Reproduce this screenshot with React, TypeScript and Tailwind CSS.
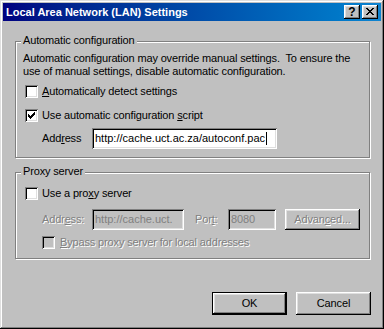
import React from "react";

// classic 3d borders
const sunken =
  "shadow-[inset_1px_1px_0_#808080,inset_-1px_-1px_0_#fff,inset_2px_2px_0_#000,inset_-2px_-2px_0_#dfdfdf]";
const raised =
  "shadow-[inset_-1px_-1px_0_#000,inset_1px_1px_0_#fff,inset_-2px_-2px_0_#808080,inset_2px_2px_0_#dfdfdf]";
const etched =
  "relative border border-[#808080] shadow-[inset_1px_1px_0_#fff,1px_1px_0_#fff]";
const grayed = "text-[#808080] [text-shadow:1px_1px_0_#fff]";

const CHECK = [
  [6, 0, 1],
  [5, 1, 2],
  [0, 2, 1],
  [4, 2, 3],
  [0, 3, 2],
  [3, 3, 3],
  [0, 4, 5],
  [1, 5, 3],
  [2, 6, 1],
];

const CLOSE = [
  [0, 0, 2],
  [6, 0, 2],
  [1, 1, 2],
  [5, 1, 2],
  [2, 2, 4],
  [3, 3, 2],
  [2, 4, 4],
  [1, 5, 2],
  [5, 5, 2],
  [0, 6, 2],
  [6, 6, 2],
];

function Pixels({ rows, w, h }: { rows: number[][]; w: number; h: number }) {
  return (
    <svg width={w} height={h} viewBox={`0 0 ${w} ${h}`} className="block" shapeRendering="crispEdges">
      {rows.map(([x, y, len], i) => (
        <rect key={i} x={x} y={y} width={len} height={1} fill="#000" />
      ))}
    </svg>
  );
}

function Checkbox({ checked, disabled }: { checked?: boolean; disabled?: boolean }) {
  return (
    <span
      className={`block w-[13px] h-[13px] shrink-0 p-[3px] ${sunken} ${
        disabled ? "bg-[#c0c0c0]" : "bg-white"
      }`}
    >
      {checked && <Pixels rows={CHECK} w={7} h={7} />}
    </span>
  );
}

function Group({ label, className, children }: { label: string; className: string; children: React.ReactNode }) {
  return (
    <div className={`${etched} w-[355px] flex flex-col ${className}`}>
      <span className="absolute -top-[8px] left-[5px] px-[2px] bg-[#c0c0c0] leading-[13px]">
        {label}
      </span>
      {children}
    </div>
  );
}

export default function App() {
  return (
    <div className="w-[384px] h-[329px] p-[3px] bg-[#c0c0c0] flex flex-col text-[11px] leading-[13px] text-black font-['Liberation_Sans',Arial,sans-serif] shadow-[inset_-1px_-1px_0_#000,inset_1px_1px_0_#dfdfdf,inset_-2px_-2px_0_#808080,inset_2px_2px_0_#fff] select-none">
      {/* Title bar */}
      <div className="h-[18px] flex items-center pl-[3px] pr-[3px] bg-linear-to-r from-[#000080] to-[#1084d0]">
        <span className="flex-1 font-bold text-white">Local Area Network (LAN) Settings</span>
        <div className="flex gap-[2px]">
          <div className={`w-[16px] h-[14px] bg-[#c0c0c0] ${raised} flex items-center justify-center font-bold text-[12px] leading-[14px] pb-[1px]`}>
            ?
          </div>
          <div className={`w-[16px] h-[14px] bg-[#c0c0c0] ${raised} flex pl-[4px] pt-[3px]`}>
            <Pixels rows={CLOSE} w={8} h={7} />
          </div>
        </div>
      </div>

      {/* Body */}
      <div className="flex-1 flex flex-col pl-[12px] pr-[10px] tracking-[-0.15px]">
        <Group label="Automatic configuration" className="mt-[20px] pt-[10px] pl-[7px] pb-[8px]">
          <p className="whitespace-nowrap">
            Automatic configuration may override manual settings.&nbsp; To ensure the
            <br />
            use of manual settings, disable automatic configuration.
          </p>
          <label className="mt-[7px] ml-[2px] h-[13px] flex items-center gap-[4px]">
            <Checkbox />
            <span>
              <u>A</u>utomatically detect settings
            </span>
          </label>
          <label className="mt-[11px] ml-[2px] h-[13px] flex items-center gap-[4px]">
            <Checkbox checked />
            <span>
              Use automatic configuration <u>s</u>cript
            </span>
          </label>
          <div className="mt-[6px] h-[21px] flex items-center">
            <span className="ml-[19px] w-[50px]">
              Add<u>r</u>ess
            </span>
            <div className={`w-[185px] h-[21px] bg-white ${sunken} flex items-center pl-[3px] overflow-hidden whitespace-nowrap tracking-normal`}>
              <span>http://cache.uct.ac.za/autoconf.pac</span>
              <span className="ml-[1px] w-px h-[13px] bg-black" />
            </div>
          </div>
        </Group>

        <Group label="Proxy server" className="mt-[14px] pt-[14px] pl-[7px] pb-[9px]">
          <label className="ml-[2px] h-[13px] flex items-center gap-[4px]">
            <Checkbox />
            <span>
              Use a pro<u>x</u>y server
            </span>
          </label>
          <div className="mt-[9px] h-[21px] flex items-center">
            <span className={`ml-[19px] w-[50px] ${grayed}`}>
              Addr<u>e</u>ss:
            </span>
            <div className={`w-[92px] h-[21px] ${sunken} flex items-center pl-[3px] overflow-hidden whitespace-nowrap text-[#808080] tracking-normal`}>
              http://cache.uct.
            </div>
            <span className={`ml-[11px] w-[33px] ${grayed}`}>
              Por<u>t</u>:
            </span>
            <div className={`w-[48px] h-[21px] ${sunken} flex items-center pl-[3px] text-[#808080]`}>8080</div>
            <div className={`ml-[9px] w-[75px] h-[21px] ${raised} flex items-center justify-center ${grayed}`}>
              Advan<u>c</u>ed...
            </div>
          </div>
          <label className="mt-[6px] ml-[19px] h-[13px] flex items-center gap-[5px]">
            <Checkbox disabled />
            <span className={grayed}>
              <u>B</u>ypass proxy server for local addresses
            </span>
          </label>
        </Group>

        <div className="mt-[33px] flex justify-end gap-[9px]">
          <button className="w-[75px] h-[23px] border border-black">
            <span className={`w-full h-full flex items-center justify-center ${raised}`}>OK</span>
          </button>
          <button className={`w-[75px] h-[23px] ${raised} flex items-center justify-center`}>Cancel</button>
        </div>
      </div>
    </div>
  );
}
